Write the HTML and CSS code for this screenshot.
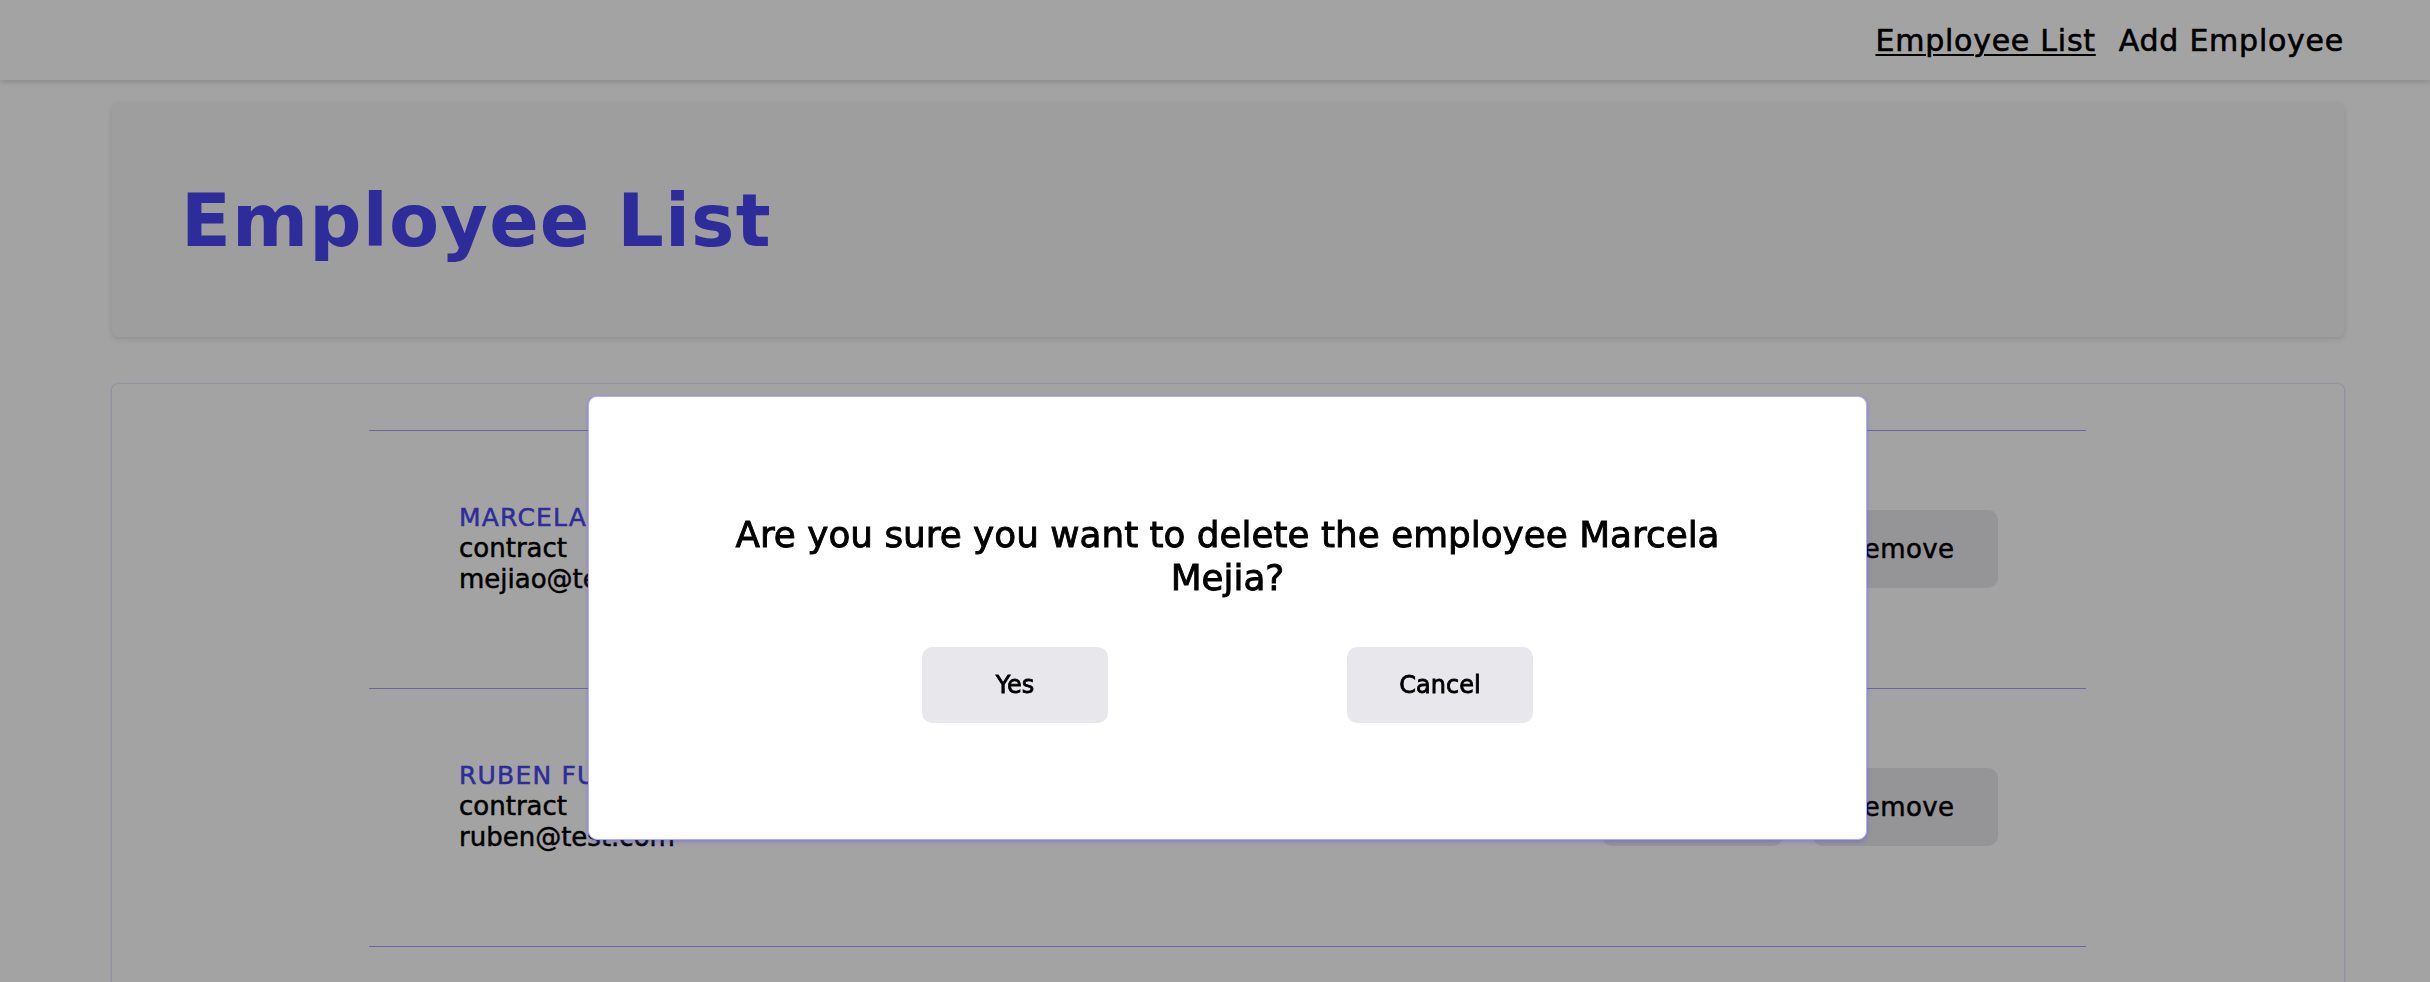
FILE: index.html
```html
<!DOCTYPE html>
<html lang="en">
<head>
<meta charset="utf-8">
<title>Employee List</title>
<link rel="stylesheet" href="styles.css">
</head>
<body>
<header class="topbar">
  <nav class="nav">
    <a class="nav-link active" href="#">Employee List</a>
    <a class="nav-link" href="#">Add Employee</a>
  </nav>
</header>
<main class="page">
  <section class="title-card">
    <h1 class="title">Employee List</h1>
  </section>
  <section class="list-card">
    <ul class="list">
      <li class="row">
        <div class="info">
          <div class="name">MARCELA MEJIA</div>
          <div class="detail">contract</div>
          <div class="detail">mejiao@test.com</div>
        </div>
        <div class="actions">
          <button class="btn btn-edit">Update</button>
          <button class="btn btn-remove">Remove</button>
        </div>
      </li>
      <li class="row">
        <div class="info">
          <div class="name">RUBEN FUENTES</div>
          <div class="detail">contract</div>
          <div class="detail">ruben@test.com</div>
        </div>
        <div class="actions">
          <button class="btn btn-edit">Update</button>
          <button class="btn btn-remove">Remove</button>
        </div>
      </li>
      <li class="row">
        <div class="info">
          <div class="name">ANA TORRES</div>
          <div class="detail">full-time</div>
          <div class="detail">ana@test.com</div>
        </div>
        <div class="actions">
          <button class="btn btn-edit">Update</button>
          <button class="btn btn-remove">Remove</button>
        </div>
      </li>
    </ul>
  </section>
</main>
<div class="overlay"></div>
<div class="modal" role="dialog" aria-modal="true">
  <p class="modal-text">Are you sure you want to delete the employee Marcela Mejia?</p>
  <div class="modal-actions">
    <button class="mbtn">Yes</button>
    <button class="mbtn">Cancel</button>
  </div>
</div>
</body>
</html>
```
FILE: styles.css
```css
html, body {
  margin: 0;
  padding: 0;
  height: 100%;
  overflow: hidden;
  background: #ffffff;
  font-family: "DejaVu Sans", "Liberation Sans", sans-serif;
  color: #000;
}

.topbar {
  height: 80px;
  display: flex;
  align-items: center;
  justify-content: flex-end;
  padding-right: 86px;
  background: #ffffff;
  box-shadow: 0 2px 6px rgba(0, 0, 0, 0.16);
  position: relative;
  z-index: 1;
}

.nav {
  display: flex;
  gap: 23px;
}

.nav-link {
  font-size: 30px;
  letter-spacing: 0.75px;
  color: #000;
  text-decoration: none;
  -webkit-text-stroke: 0.6px #000;
}

.nav-link.active {
  text-decoration: underline;
  text-underline-offset: 3px;
  text-decoration-thickness: 2px;
}

.page {
  margin-left: 112px;
  width: 2232px;
  padding-top: 23px;
}

.title-card {
  height: 234px;
  box-sizing: border-box;
  display: flex;
  align-items: center;
  padding-left: 69px;
  background: #f7f7f7;
  border-radius: 6px;
  box-shadow: 0 2px 6px rgba(0, 0, 0, 0.12);
}

.title {
  margin: 0;
  font-size: 73px;
  font-weight: 700;
  letter-spacing: 1.2px;
  color: #4845f3;
}

.list-card {
  margin-top: 47px;
  background: #ffffff;
  border-radius: 6px;
  padding-top: 46px;
  min-height: 900px;
  box-shadow: -1px 0 2px rgba(72, 69, 243, 0.18), 1px 0 2px rgba(72, 69, 243, 0.18), 0 -1px 2px rgba(0, 0, 0, 0.03);
}

.list {
  list-style: none;
  margin: 0 258px 0 257px;
  padding: 0;
}

.row {
  border-top: 1px solid #a3a2ff;
  display: flex;
  align-items: center;
  justify-content: space-between;
  padding: 71px 88px 93px 90px;
}

.info {
  font-size: 26px;
  line-height: 31px;
  -webkit-text-stroke: 0.5px #000;
}

.name {
  font-size: 25px;
  letter-spacing: 1.2px;
  color: #4845f3;
  -webkit-text-stroke: 0.5px #4845f3;
}

.actions {
  display: flex;
  gap: 30px;
}

.btn {
  height: 78px;
  border: none;
  border-radius: 10px;
  background: #e9e8ed;
  font-family: inherit;
  font-size: 26px;
  letter-spacing: 0.4px;
  color: #000;
  -webkit-text-stroke: 0.5px #000;
}

.btn-edit { width: 181px; }
.btn-remove { width: 185px; padding: 0 10px 0 0; }

.overlay {
  position: fixed;
  inset: 0;
  background: rgba(0, 0, 0, 0.36);
  z-index: 5;
}

.modal {
  position: fixed;
  left: 588px;
  top: 396px;
  width: 1279px;
  height: 444px;
  box-sizing: border-box;
  background: #ffffff;
  border: 1px solid #b1acfb;
  border-radius: 9px;
  box-shadow: 0 2px 5px rgba(90, 80, 240, 0.45);
  z-index: 10;
  display: flex;
  flex-direction: column;
  align-items: center;
  justify-content: center;
}

.modal-text {
  margin: 0;
  width: 1030px;
  text-align: center;
  font-size: 35.8px;
  line-height: 43px;
  -webkit-text-stroke: 0.9px #000;
}

.modal-actions {
  display: flex;
  gap: 239px;
  margin-top: 48px;
}

.mbtn {
  width: 186px;
  height: 76px;
  border: none;
  border-radius: 10px;
  background: #e8e7ec;
  font-family: inherit;
  font-size: 24px;
  color: #000;
  -webkit-text-stroke: 0.8px #000;
}
```
